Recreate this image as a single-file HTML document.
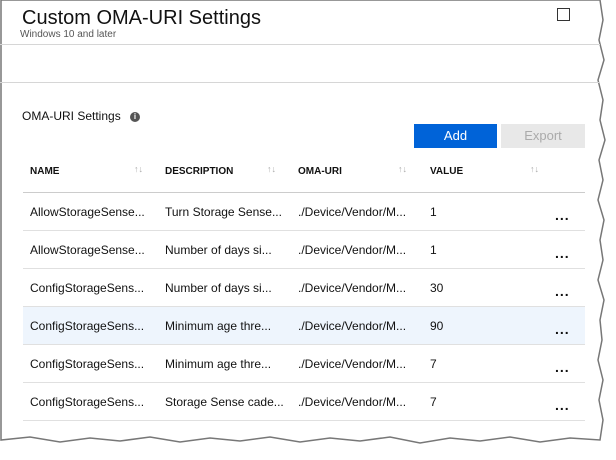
<!DOCTYPE html>
<html><head><style>
body{margin:0;width:616px;height:460px;background:#fff;font-family:"Liberation Sans",sans-serif;position:relative;overflow:hidden;color:#111}
.a{position:absolute;white-space:nowrap}
.hl{position:absolute;left:0;width:600px;height:1px;background:#d6d6d6}
.rl{position:absolute;left:23px;width:562px;height:1px;background:#e0e0e0}
.h{font-size:10px;font-weight:bold;top:166px}
.s{font-size:9px;color:#aaa;top:164px}
.c{font-size:12px}
.d{font-size:14px;font-weight:bold;letter-spacing:1px;left:555px}
</style></head><body>
<svg class="a" style="left:0;top:0" width="616" height="460">
<path d="M1,0 L600,0 L603,20 L599,40 L604,60 L598,80 L603,100 L600,120 L605,140 L599,160 L603,180 L598,200 L604,220 L600,240 L603,260 L598,280 L604,300 L600,320 L602,340 L598,360 L603,380 L599,400 L603,420 L600,440 L570,438 L540,442 L510,437 L480,441 L450,438 L420,443 L390,437 L360,441 L330,438 L300,442 L270,437 L240,441 L210,438 L180,442 L150,437 L120,441 L90,438 L60,442 L30,437 L1,440 Z" fill="#fff" stroke="#777" stroke-width="1.5"/>
</svg>
<div class="a" style="left:22px;top:7px;font-size:20px">Custom OMA-URI Settings</div>
<div class="a" style="left:20px;top:29px;font-size:10px;color:#555">Windows 10 and later</div>
<div class="a" style="left:557px;top:8px;width:11px;height:11px;border:1px solid #333"></div>
<div class="hl" style="top:44px"></div>
<div class="hl" style="top:82px"></div>
<div class="a" style="left:22px;top:109px;font-size:12px">OMA-URI Settings</div>
<div class="a" style="left:130px;top:112px;width:10px;height:10px;border-radius:50%;background:#555;color:#fff;font-size:8px;font-weight:bold;text-align:center;line-height:10px">i</div>
<div class="a" style="left:414px;top:124px;width:83px;height:24px;background:#0063d8;color:#fff;font-size:13px;text-align:center;line-height:24px">Add</div>
<div class="a" style="left:501px;top:124px;width:84px;height:24px;background:#e8e8e8;color:#aaa;font-size:13px;text-align:center;line-height:24px">Export</div>
<div class="a h" style="left:30px">NAME</div><div class="a s" style="left:134px">↑↓</div>
<div class="a h" style="left:165px">DESCRIPTION</div><div class="a s" style="left:267px">↑↓</div>
<div class="a h" style="left:298px">OMA-URI</div><div class="a s" style="left:398px">↑↓</div>
<div class="a h" style="left:430px">VALUE</div><div class="a s" style="left:530px">↑↓</div>
<div class="rl" style="top:192px;background:#ccc"></div>
<div class="a" style="left:23px;top:307px;width:562px;height:37px;background:#eef5fd"></div>
<div class="rl" style="top:230px"></div><div class="rl" style="top:268px"></div><div class="rl" style="top:306px"></div><div class="rl" style="top:344px"></div><div class="rl" style="top:382px"></div><div class="rl" style="top:420px"></div>

<div class="a c" style="left:30px;top:205px">AllowStorageSense...</div><div class="a c" style="left:165px;top:205px">Turn Storage Sense...</div><div class="a c" style="left:298px;top:205px">./Device/Vendor/M...</div><div class="a c" style="left:430px;top:205px">1</div><div class="a d" style="top:207px">...</div>
<div class="a c" style="left:30px;top:243px">AllowStorageSense...</div><div class="a c" style="left:165px;top:243px">Number of days si...</div><div class="a c" style="left:298px;top:243px">./Device/Vendor/M...</div><div class="a c" style="left:430px;top:243px">1</div><div class="a d" style="top:245px">...</div>
<div class="a c" style="left:30px;top:281px">ConfigStorageSens...</div><div class="a c" style="left:165px;top:281px">Number of days si...</div><div class="a c" style="left:298px;top:281px">./Device/Vendor/M...</div><div class="a c" style="left:430px;top:281px">30</div><div class="a d" style="top:283px">...</div>
<div class="a c" style="left:30px;top:319px">ConfigStorageSens...</div><div class="a c" style="left:165px;top:319px">Minimum age thre...</div><div class="a c" style="left:298px;top:319px">./Device/Vendor/M...</div><div class="a c" style="left:430px;top:319px">90</div><div class="a d" style="top:321px">...</div>
<div class="a c" style="left:30px;top:357px">ConfigStorageSens...</div><div class="a c" style="left:165px;top:357px">Minimum age thre...</div><div class="a c" style="left:298px;top:357px">./Device/Vendor/M...</div><div class="a c" style="left:430px;top:357px">7</div><div class="a d" style="top:359px">...</div>
<div class="a c" style="left:30px;top:395px">ConfigStorageSens...</div><div class="a c" style="left:165px;top:395px">Storage Sense cade...</div><div class="a c" style="left:298px;top:395px">./Device/Vendor/M...</div><div class="a c" style="left:430px;top:395px">7</div><div class="a d" style="top:397px">...</div>
</body></html>
